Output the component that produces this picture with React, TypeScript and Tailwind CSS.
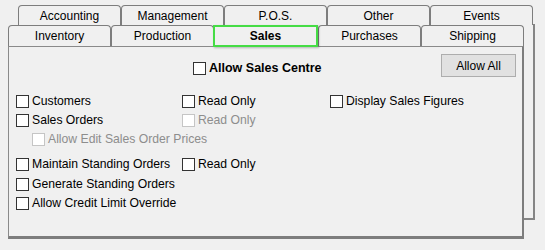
import React from "react";

const topTabs = ["Accounting", "Management", "P.O.S.", "Other", "Events"];
const bottomTabs = ["Inventory", "Production", "Sales", "Purchases", "Shipping"];

function Box({ disabled }: { disabled?: boolean }) {
  return (
    <span
      className={
        "inline-block h-[13px] w-[13px] shrink-0 border bg-white " +
        (disabled ? "border-[#c5c5c5]" : "border-[#333333]")
      }
    />
  );
}

function Check({
  label,
  disabled,
  bold,
}: {
  label: string;
  disabled?: boolean;
  bold?: boolean;
}) {
  return (
    <div className="flex items-center">
      <Box disabled={disabled} />
      <span
        className={
          "ml-[3px] whitespace-nowrap " +
          (disabled ? "text-[#8d8d8d]" : "text-black") +
          (bold ? " font-bold" : "")
        }
      >
        {label}
      </span>
    </div>
  );
}

function Tab({ label, active }: { label: string; active?: boolean }) {
  if (active) {
    return (
      <div className="relative z-10 -ml-px flex h-[22px] w-[105px] items-center justify-center border-2 border-[#45dc45] bg-[#f0f0f0] font-bold shadow-[1px_1px_2px_rgba(0,0,0,0.25)]">
        {label}
      </div>
    );
  }
  return (
    <div className="flex h-full w-[103px] items-center justify-center rounded-t-[4px] border border-b-0 border-[#7d7d7d] bg-[#f0f0f0]">
      {label}
    </div>
  );
}

export default function App() {
  return (
    <div
      className="relative h-[250px] w-[545px] overflow-hidden bg-[#f0f0f0] text-[12px] text-black"
      style={{ fontFamily: '"Liberation Sans", Arial, sans-serif' }}
    >
      {/* back layer of the two-row tab pane */}
      <div className="absolute left-[18px] top-[24px] h-[196px] w-[517px] border-b-2 border-r-2 border-[#858585]" />

      <div className="relative pl-[8px] pt-[5px]">
        <div className="ml-[10px] flex h-[20px]">
          {topTabs.map((t) => (
            <Tab key={t} label={t} />
          ))}
        </div>
        <div className="flex h-[21px] items-start">
          {bottomTabs.map((t) => (
            <Tab key={t} label={t} active={t === "Sales"} />
          ))}
        </div>

        <div className="h-[193px] w-[516px] border-l border-t border-[#8a8a8a] border-b-[3px] border-r-[2px] border-b-[#7d7d7d] border-r-[#7d7d7d] bg-[#f0f0f0] pl-[7px]">
          <div className="mt-[7px] flex items-start">
            <div className="ml-[177px] mt-[5px] text-[12.5px]">
              <Check label="Allow Sales Centre" bold />
            </div>
            <button className="ml-auto mr-[6px] h-[23px] w-[75px] border border-[#adadad] bg-[#e1e1e1] text-[12px]">
              Allow All
            </button>
          </div>

          <div className="mt-[14px] flex flex-col text-[12.2px]">
            <div className="flex h-[19px] items-center">
              <div className="w-[166px]">
                <Check label="Customers" />
              </div>
              <div className="w-[148px]">
                <Check label="Read Only" />
              </div>
              <Check label="Display Sales Figures" />
            </div>
            <div className="flex h-[19px] items-center">
              <div className="w-[166px]">
                <Check label="Sales Orders" />
              </div>
              <Check label="Read Only" disabled />
            </div>
            <div className="flex h-[19px] items-center pl-[16px]">
              <Check label="Allow Edit Sales Order Prices" disabled />
            </div>
            <div className="mt-[6px] flex h-[19px] items-center">
              <div className="w-[166px]">
                <Check label="Maintain Standing Orders" />
              </div>
              <Check label="Read Only" />
            </div>
            <div className="mt-px flex h-[19px] items-center">
              <Check label="Generate Standing Orders" />
            </div>
            <div className="flex h-[19px] items-center">
              <Check label="Allow Credit Limit Override" />
            </div>
          </div>
        </div>
      </div>
    </div>
  );
}
